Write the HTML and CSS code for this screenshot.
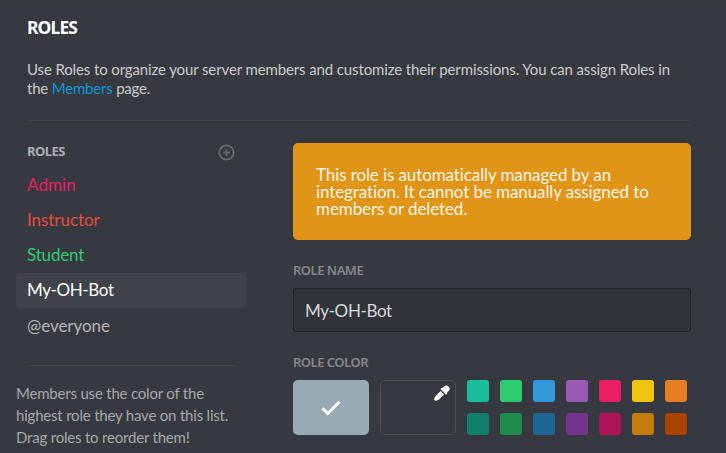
FILE: index.html
```
<!DOCTYPE html>
<html lang="en">
<head>
<meta charset="utf-8">
<title>Roles</title>
<link rel="stylesheet" href="styles.css">
</head>
<body>
<main class="page">
  <header class="intro">
    <h1 class="title">ROLES</h1>
    <p class="description">Use Roles to organize your server members and customize their permissions. You can assign Roles in<br><span class="line-tail">the <a class="link">Members</a> page.</span></p>
  </header>
  <div class="columns">
    <aside class="sidebar">
      <div class="sidebar-head">
        <h2 class="sidebar-title">ROLES</h2>
        <svg class="add" viewBox="0 0 16 16"><circle cx="8" cy="8" r="6.7"/><path d="M8 4.8v6.4M4.8 8h6.4"/></svg>
      </div>
      <ul class="roles">
        <li class="role admin">Admin</li>
        <li class="role instructor">Instructor</li>
        <li class="role student">Student</li>
        <li class="role selected">My-OH-Bot</li>
        <li class="role everyone">@everyone</li>
      </ul>
      <p class="hint">Members use the color of the<br>highest role they have on this list.<br>Drag roles to reorder them!</p>
    </aside>
    <section class="editor">
      <div class="notice">This role is automatically managed by an<br>integration. It cannot be manually assigned to<br>members or deleted.</div>
      <h2 class="label">ROLE NAME</h2>
      <div class="field">My-OH-Bot</div>
      <h2 class="label color-label">ROLE COLOR</h2>
      <div class="picker">
        <div class="big current"><svg class="check" viewBox="0 0 20 16"><path d="M1.5 8.3 6.7 13.5 18.5 1.7"/></svg></div>
        <div class="big custom"><svg class="dropper" viewBox="0 0 16 16"><path d="M10.1 1.5a3.2 3.2 0 0 1 4.5 0 3.2 3.2 0 0 1 0 4.5L12.8 7.8l.5.6-1.3 1.3-5.6-5.6 1.3-1.3.6.5z"/><path d="M6.6 6 10 9.4l-5 5c-.6.6-1.5.7-2.1 1l-1.3.6L0 14.4l.6-1.3c.3-.6.4-1.5 1-2.1z"/></svg></div>
        <div class="swatches">
          <i class="swatch teal"></i><i class="swatch green"></i><i class="swatch blue"></i><i class="swatch purple"></i><i class="swatch pink"></i><i class="swatch yellow"></i><i class="swatch orange"></i>
          <i class="swatch dark-teal"></i><i class="swatch dark-green"></i><i class="swatch dark-blue"></i><i class="swatch dark-purple"></i><i class="swatch dark-pink"></i><i class="swatch dark-yellow"></i><i class="swatch dark-orange"></i>
        </div>
      </div>
    </section>
  </div>
</main>
</body>
</html>
```
FILE: styles.css
```
* { box-sizing: border-box; margin: 0; padding: 0; }
body {
  background: #36393f;
  font-family: Lato, "Noto Sans", sans-serif;
  overflow: hidden;
}
.page { height: 453px; border-top: 1px solid #303338; padding: 16px 35px 0 16px; }
.intro { margin-left: 11px; height: 104px; border-bottom: 1px solid #424549; }
.title { font: 700 17.5px/20px "Noto Sans", sans-serif; letter-spacing: -0.9px; color: #fff; }
.description {
  margin-top: 23px;
  font-size: 15px;
  line-height: 19px;
  letter-spacing: -0.12px;
  color: #cbccce;
  white-space: nowrap;
}
.line-tail { letter-spacing: -0.2px; }
.link { color: #0998d8; }
.columns { display: flex; gap: 47px; margin-top: 22px; }
.sidebar { width: 230px; }
.sidebar-head { display: flex; justify-content: space-between; padding: 0 11px 0 11px; height: 25px; }
.sidebar-title { font: 700 13px/16px "Noto Sans", sans-serif; letter-spacing: -0.5px; color: #adafb2; }
.add { width: 17px; height: 17px; margin-top: 1px; fill: none; stroke: #66696e; stroke-width: 1.7; }
.roles { list-style: none; height: 198px; margin-right: 10px; border-bottom: 1px solid #424549; margin-left: 11px; }
.role {
  height: 35px;
  width: 230px;
  margin-left: -11px;
  padding-left: 11px;
  font-size: 17px;
  line-height: 33px;
  letter-spacing: -0.05px;
  border-radius: 3px;
}
.admin { color: #e91e63; letter-spacing: 0.1px; }
.instructor { color: #e74c3c; }
.student { color: #2ecc71; letter-spacing: -0.16px; }
.selected { background: #3f4248; color: #fff; letter-spacing: -0.38px; }
.everyone { margin-top: 1px; color: #b4b6b9; }
.hint { margin-top: 16px; font-size: 15px; line-height: 22px; letter-spacing: -0.2px; color: #a6a8ab; white-space: nowrap; }
.editor { width: 398px; }
.notice {
  height: 97px;
  padding: 23px;
  background: #e09517;
  border-radius: 5px;
  color: #fcf4e8;
  font-size: 17px;
  line-height: 17px;
  letter-spacing: -0.1px;
  white-space: nowrap;
}
.label { margin-top: 22px; font: 600 13px/16px "Noto Sans", sans-serif; letter-spacing: -0.5px; color: #85878b; }
.field {
  height: 44px;
  margin-top: 10px;
  padding-left: 11px;
  border: 1px solid #212326;
  border-radius: 3px;
  background: #303338;
  color: #d8d9da;
  font-size: 17px;
  line-height: 43px;
  letter-spacing: -0.35px;
}
.picker { display: flex; gap: 11px; margin-top: 10px; }
.big { width: 76px; height: 55px; border-radius: 5px; }
.current { display: flex; align-items: center; justify-content: center; background: #99aab5; }
.check { width: 20px; height: 16px; fill: none; stroke: #fff; stroke-width: 2.8; }
.custom { display: flex; justify-content: flex-end; padding: 4px 5px; border: 1px solid #4b4e52; }
.dropper { width: 16px; height: 16px; fill: #fff; }
.swatches { display: grid; grid-template-columns: repeat(7, 22px); grid-auto-rows: 22px; gap: 11px; }
.swatch { border-radius: 3px; }
.teal { background: #1abc9c; }
.green { background: #2ecc71; }
.blue { background: #3498db; }
.purple { background: #9b59b6; }
.pink { background: #e91e63; }
.yellow { background: #f1c40f; }
.orange { background: #e67e22; }
.dark-teal { background: #11806a; }
.dark-green { background: #1f8b4c; }
.dark-blue { background: #206694; }
.dark-purple { background: #71368a; }
.dark-pink { background: #ad1457; }
.dark-yellow { background: #c27c0e; }
.dark-orange { background: #a84300; }
```
